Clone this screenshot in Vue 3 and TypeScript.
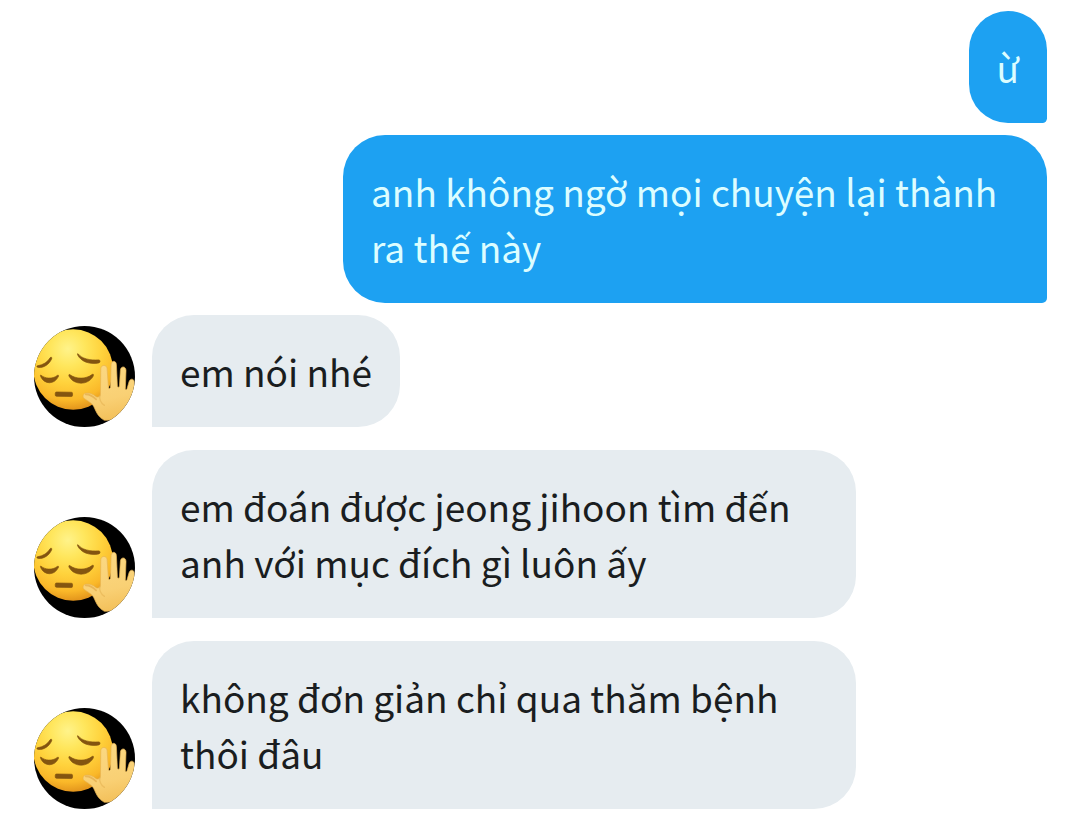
<script setup lang="ts">
interface Message {
  id: number
  text: string
  sent: boolean
}

const messages: Message[] = [
  { id: 1, text: 'ừ', sent: true },
  { id: 2, text: 'anh không ngờ mọi chuyện lại thành ra thế này', sent: true },
  { id: 3, text: 'em nói nhé', sent: false },
  { id: 4, text: 'em đoán được jeong jihoon tìm đến anh với mục đích gì luôn ấy', sent: false },
  { id: 5, text: 'không đơn giản chỉ qua thăm bệnh thôi đâu', sent: false },
]
</script>

<template>
  <main class="chat">
    <div v-for="m in messages" :key="m.id" class="row" :class="m.sent ? 'sent' : 'received'">
      <svg v-if="!m.sent" class="avatar" viewBox="30 31 304 304" aria-hidden="true">
        <defs>
          <radialGradient :id="`face-${m.id}`" gradientUnits="userSpaceOnUse" cx="132" cy="100" r="188">
            <stop offset="0" stop-color="#fff38a" />
            <stop offset="0.28" stop-color="#ffe65c" />
            <stop offset="0.55" stop-color="#ffd23c" />
            <stop offset="0.82" stop-color="#fab829" />
            <stop offset="1" stop-color="#e0901a" />
          </radialGradient>
          <linearGradient :id="`hand-${m.id}`" x1="0.3" y1="0" x2="0.5" y2="1">
            <stop offset="0" stop-color="#fbd984" />
            <stop offset="0.65" stop-color="#f9d074" />
            <stop offset="1" stop-color="#f3c05a" />
          </linearGradient>
        </defs>
        <rect x="30" y="31" width="304" height="304" fill="#000" />
        <ellipse cx="148" cy="162" rx="120" ry="121" :fill="`url(#face-${m.id})`" />
        <g fill="#845510" stroke="#845510" stroke-width="2" stroke-linejoin="round">
          <path d="M40 151C58 148 71 140 79 126C82 123 85 126 83 130C76 146 60 157 44 156C39 156 37 152 40 151Z" />
          <path d="M163 115C174 129 197 135 225 133C230 133 230 141 225 142C196 148 171 137 162 119C160 115 161 113 163 115Z" />
          <path d="M51 179C62 189 85 192 100 180C104 177 105 181 103 184C91 208 62 207 51 185C49 181 49 177 51 179Z" />
          <path d="M137 177C157 192 187 191 205 177C210 174 210 179 207 184C191 210 152 208 138 186C134 181 134 176 137 177Z" />
          <rect x="94" y="230" width="52" height="13" rx="4" transform="rotate(1 120 237)" />
        </g>
        <path
          d="M242 315C225 306 219 294 212 278C206 262 193 258 181 249C174 243 179 233 188 233C199 232 207 236 216 243C222 248 230 243 230 235L231 160C231 147 249 146 250 159L254 216Q256 222 260 216L262 147C263 134 277 134 278 147L281 212Q284 219 287 212L290 164C291 151 306 151 307 164L305 220Q307 226 310 220L316 199C319 187 333 189 332 202L328 244C324 274 308 294 288 304C271 311 257 315 242 315Z"
          :fill="`url(#hand-${m.id})`"
          stroke="#e8b452"
          stroke-width="2"
        />
        <path d="M186 237C201 237 209 244 217 252" fill="none" stroke="#d99a35" stroke-width="5" stroke-linecap="round" opacity="0.5" />
        <path d="M229 239C225 250 231 263 242 270" fill="none" stroke="#e4b050" stroke-width="4" stroke-linecap="round" opacity="0.55" />
      </svg>
      <p class="bubble">{{ m.text }}</p>
    </div>
  </main>
</template>

<style>
body {
  margin: 0;
  background: #fff;
}
</style>

<style scoped>
.chat {
  display: flex;
  flex-direction: column;
  gap: 12px;
  padding: 11px 33px 11px 34px;
  font-family: "Noto Sans CJK JP", "Noto Sans CJK SC", "Noto Sans", sans-serif;
  font-size: 37px;
  line-height: 56px;
}

.row {
  display: flex;
  align-items: flex-end;
  gap: 17px;
}

.sent {
  justify-content: flex-end;
}

.received + .received {
  margin-top: 11px;
}

.avatar {
  flex: none;
  width: 101px;
  height: 101px;
  border-radius: 50%;
}

.bubble {
  box-sizing: border-box;
  max-width: 704px;
  margin: 0;
  padding: 28px;
}

.sent .bubble {
  background: #1da1f2;
  color: #dcfdff;
  border-radius: 42px 42px 5px 42px;
}

.received .bubble {
  background: #e6ecf0;
  color: #1a1d20;
  border-radius: 42px 42px 42px 0;
}
</style>
